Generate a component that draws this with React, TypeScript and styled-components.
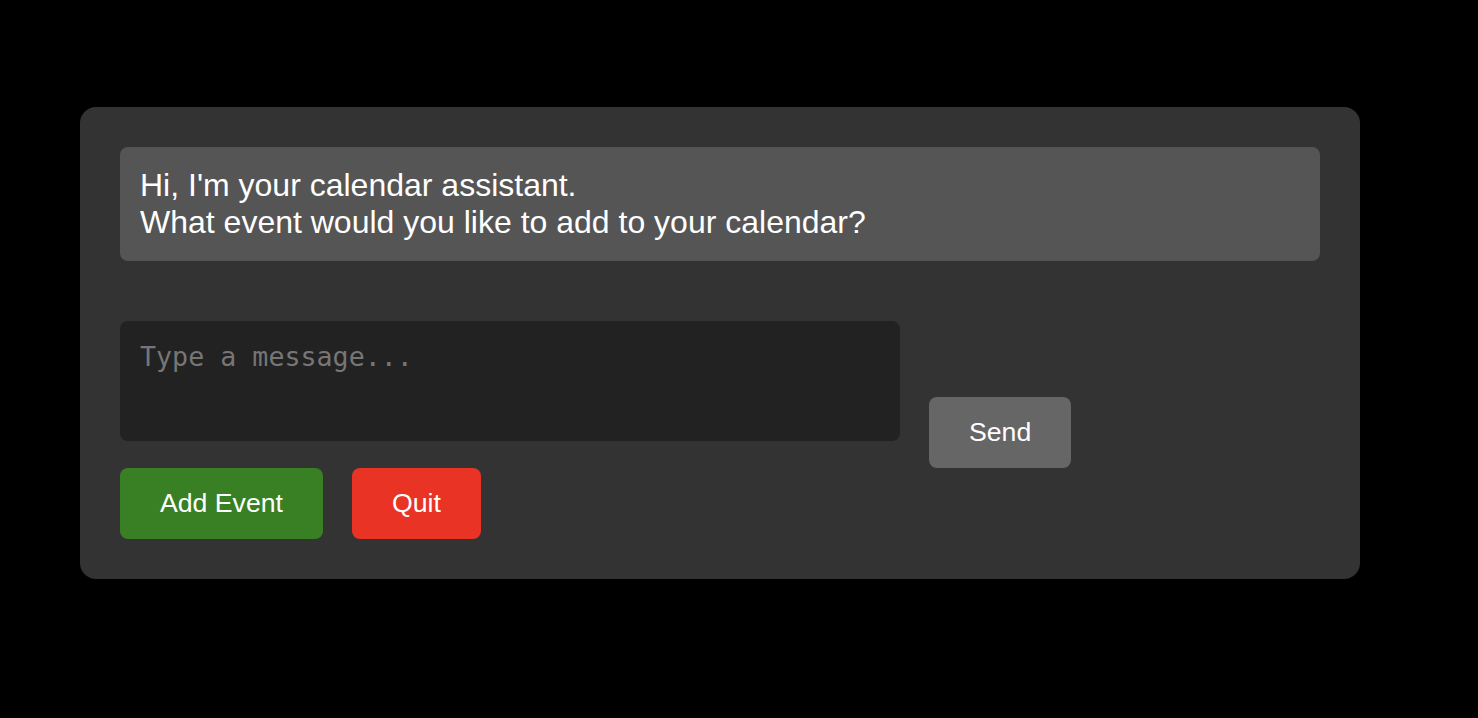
import React from "react";
import styled, { createGlobalStyle } from "styled-components";

const GlobalStyle = createGlobalStyle`
  html, body {
    margin: 0;
    padding: 0;
    background: #000;
  }
  body {
    font-family: "Liberation Sans", Arial, Helvetica, sans-serif;
  }
`;

const Page = styled.div`
  min-height: 718px;
  padding: 107px 0 0 80px;
  box-sizing: border-box;
`;

const Card = styled.div`
  width: 1280px;
  box-sizing: border-box;
  padding: 40px;
  background: #333333;
  border-radius: 16px;
  display: flex;
  flex-direction: column;
`;

const Message = styled.div`
  background: #555555;
  border-radius: 8px;
  padding: 20px;
  color: #ffffff;
  font-size: 32px;
  line-height: normal;
`;

const InputRow = styled.div`
  display: flex;
  align-items: flex-start;
  margin-top: 60px;
`;

const TextArea = styled.textarea`
  width: 780px;
  height: 120px;
  box-sizing: border-box;
  padding: 20px;
  border: none;
  border-radius: 8px;
  background: #222222;
  color: #ffffff;
  font-family: "DejaVu Sans Mono", "Liberation Mono", monospace;
  font-size: 26.67px;
  resize: none;
  outline: none;
  &::placeholder {
    color: #767676;
  }
`;

const Button = styled.button<{ $bg: string }>`
  background: ${(p) => p.$bg};
  color: #ffffff;
  border: none;
  border-radius: 8px;
  padding: 20px 40px;
  font-family: "Liberation Sans", Arial, Helvetica, sans-serif;
  font-size: 26.67px;
  line-height: normal;
  cursor: pointer;
`;

const SendButton = styled(Button)`
  margin-left: 29px;
  margin-top: 76px;
`;

const ActionRow = styled.div`
  display: flex;
  gap: 29px;
`;

export default function App() {
  return (
    <>
      <GlobalStyle />
      <Page>
        <Card>
          <Message>
            Hi, I'm your calendar assistant.
            <br />
            What event would you like to add to your calendar?
          </Message>
          <InputRow>
            <TextArea placeholder="Type a message..." />
            <SendButton $bg="#666666">Send</SendButton>
          </InputRow>
          <ActionRow>
            <Button $bg="#388023">Add Event</Button>
            <Button $bg="#e93324">Quit</Button>
          </ActionRow>
        </Card>
      </Page>
    </>
  );
}
